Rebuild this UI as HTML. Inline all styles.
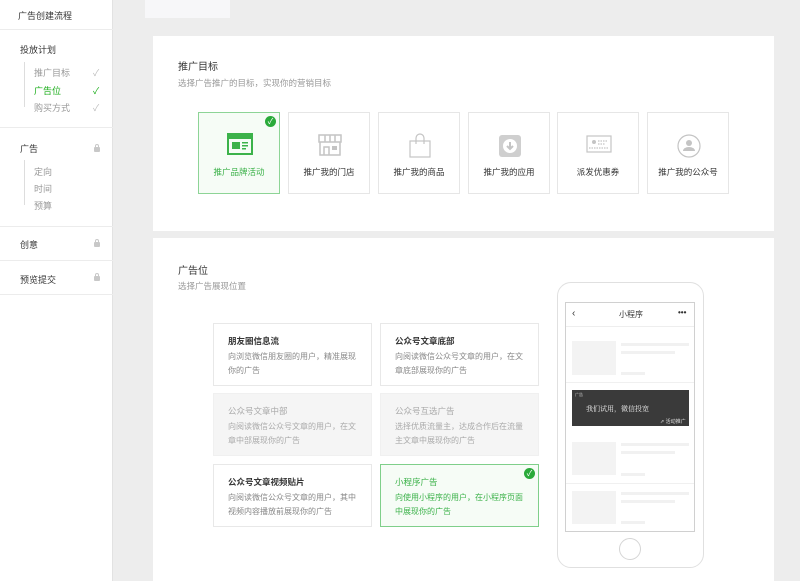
<!DOCTYPE html>
<html><head><meta charset="utf-8"><style>
*{margin:0;padding:0;box-sizing:border-box}
body{width:800px;height:581px;overflow:hidden;background:#ededed;font-family:"Liberation Sans","Noto Sans CJK SC",sans-serif;position:relative;color:#353535}
.a{position:absolute}
.sb{left:0;top:0;width:113px;height:581px;background:#fff;border-right:1px solid #e2e2e2}
.sb .t{font-size:9px;color:#353535}
.hr{left:0;width:113px;height:1px;background:#ececec}
.sub{font-size:9px;color:#999}
.ck{font-size:9px;color:#bbb}
.lk{width:6px;height:5px;background:#c8c8c8;border-radius:1px}
.lk:before{content:"";position:absolute;left:1px;top:-3px;width:4px;height:4px;border:1px solid #c8c8c8;border-bottom:none;border-radius:2px 2px 0 0;box-sizing:border-box}
.card{background:#fff;left:153px;width:621px}
.h{font-size:10px;color:#353535}
.s{font-size:8.5px;color:#9a9a9a}
.tile{top:112px;width:82px;height:82px;background:#fff;border:1px solid #e6e6e6;text-align:center}
.tile .l{position:absolute;left:0;right:0;top:53px;font-size:8.5px;color:#353535}
.tile svg{position:absolute;left:28px;top:20px}
.pc{width:159px;height:63px;background:#fff;border:1px solid #e8e8e8;padding:11px 0 0 14px}
.pc b{display:block;font-size:8.5px;font-weight:bold;color:#353535;margin-bottom:3px}
.pc p{font-size:8px;line-height:14px;color:#888;width:130px}
.pc.d{background:#f5f5f5;border-color:#f0f0f0}
.pc.d b{font-weight:normal;color:#aaa}.pc.d p{color:#aaa}
.pc.g{background:#f6fcf6;border-color:#7fcf8a}
.pc.g b{font-weight:normal;color:#3cb24a}.pc.g p{color:#3cb24a}
.gc{width:11px;height:11px;border-radius:50%;background:#2aaa3a;color:#fff;font-size:8px;line-height:11px;text-align:center}
.gl{background:#f1f1f1;height:3px}
</style></head><body>
<div class="a sb">
 <div class="a t" style="left:18px;top:9px">广告创建流程</div>
 <div class="a hr" style="top:29px"></div>
 <div class="a t" style="left:20px;top:43px">投放计划</div>
 <div class="a" style="left:24px;top:62px;width:1px;height:45px;background:#ddd"></div>
 <div class="a sub" style="left:34px;top:66px">推广目标</div><div class="a ck" style="left:93px;top:66px">✓</div>
 <div class="a sub" style="left:34px;top:84px;color:#1aad19">广告位</div><div class="a ck" style="left:93px;top:84px;color:#1aad19">✓</div>
 <div class="a sub" style="left:34px;top:101px">购买方式</div><div class="a ck" style="left:93px;top:101px">✓</div>
 <div class="a hr" style="top:127px"></div>
 <div class="a t" style="left:20px;top:142px">广告</div><div class="a lk" style="left:94px;top:147px"></div>
 <div class="a" style="left:24px;top:160px;width:1px;height:45px;background:#ddd"></div>
 <div class="a sub" style="left:34px;top:165px">定向</div>
 <div class="a sub" style="left:34px;top:182px">时间</div>
 <div class="a sub" style="left:34px;top:199px">预算</div>
 <div class="a hr" style="top:226px"></div>
 <div class="a t" style="left:20px;top:238px">创意</div><div class="a lk" style="left:94px;top:242px"></div>
 <div class="a hr" style="top:260px"></div>
 <div class="a t" style="left:20px;top:273px">预览提交</div><div class="a lk" style="left:94px;top:276px"></div>
 <div class="a hr" style="top:294px"></div>
</div>
<div class="a" style="left:145px;top:0;width:85px;height:18px;background:#f7f7f9"></div>

<div class="a card" style="top:36px;height:195px">
 <div class="a h" style="left:25px;top:22px">推广目标</div>
 <div class="a s" style="left:25px;top:41px">选择广告推广的目标，实现你的营销目标</div>
</div>
<div class="a tile" style="left:198px;background:#f6fcf6;border-color:#8dd496">
 <svg width="26" height="22" viewBox="0 0 26 22"><rect x="1" y="1" width="24" height="20" fill="none" stroke="#3cb24a" stroke-width="2"/><rect x="1" y="1" width="24" height="5" fill="#3cb24a"/><rect x="5" y="9" width="8" height="7" fill="#3cb24a"/><rect x="15" y="9" width="6" height="1.5" fill="#3cb24a"/><rect x="15" y="12" width="6" height="1.5" fill="#3cb24a"/><rect x="15" y="15" width="4" height="1.5" fill="#3cb24a"/></svg>
 <div class="l" style="color:#3cb24a">推广品牌活动</div>
 <div class="a gc" style="left:66px;top:3px">✓</div>
</div>
<div class="a tile" style="left:288px"><svg width="26" height="24" viewBox="0 0 26 24"><path d="M2 2h22v7H2z M8 2v7 M13 2v7 M18 2v7" fill="none" stroke="#c4c4c4" stroke-width="1.5"/><path d="M3 9v13h20V9 M7 22v-8h5v8" fill="none" stroke="#c4c4c4" stroke-width="1.5"/><rect x="15" y="13" width="5" height="4" fill="#c4c4c4"/></svg><div class="l">推广我的门店</div></div>
<div class="a tile" style="left:378px"><svg width="26" height="26" viewBox="0 0 26 26"><rect x="3" y="8" width="20" height="16" fill="none" stroke="#c4c4c4" stroke-width="1.2"/><path d="M9 11V5a4 4 0 0 1 8 0v6" fill="none" stroke="#c4c4c4" stroke-width="1.2"/></svg><div class="l">推广我的商品</div></div>
<div class="a tile" style="left:468px"><svg width="26" height="26" viewBox="0 0 26 26"><rect x="2" y="2" width="22" height="22" rx="3" fill="#cfcfcf"/><circle cx="13" cy="13" r="7" fill="#fff"/><path d="M13 9v7 M10 13l3 3 3-3" stroke="#c4c4c4" stroke-width="2" fill="none"/></svg><div class="l">推广我的应用</div></div>
<div class="a tile" style="left:557px"><svg width="26" height="22" viewBox="0 0 26 22"><rect x="1" y="3" width="24" height="16" fill="none" stroke="#c4c4c4" stroke-width="1.2"/><circle cx="8" cy="9" r="2" fill="#c4c4c4"/><path d="M12 8h9 M12 11h7 M3 15h20" stroke="#c4c4c4" stroke-width="1.2" stroke-dasharray="1.5 1"/></svg><div class="l">派发优惠券</div></div>
<div class="a tile" style="left:647px"><svg width="26" height="26" viewBox="0 0 26 26"><circle cx="13" cy="13" r="11" fill="none" stroke="#c4c4c4" stroke-width="1.2"/><circle cx="13" cy="10" r="3" fill="#c4c4c4"/><path d="M7 18a6 4 0 0 1 12 0z" fill="#c4c4c4"/></svg><div class="l">推广我的公众号</div></div>

<div class="a card" style="top:238px;height:343px">
 <div class="a h" style="left:25px;top:24px">广告位</div>
 <div class="a s" style="left:25px;top:42px">选择广告展现位置</div>
</div>
<div class="a pc" style="left:213px;top:323px"><b>朋友圈信息流</b><p>向浏览微信朋友圈的用户，精准展现你的广告</p></div>
<div class="a pc" style="left:380px;top:323px"><b>公众号文章底部</b><p>向阅读微信公众号文章的用户，在文章底部展现你的广告</p></div>
<div class="a pc d" style="left:213px;top:393px"><b>公众号文章中部</b><p>向阅读微信公众号文章的用户，在文章中部展现你的广告</p></div>
<div class="a pc d" style="left:380px;top:393px"><b>公众号互选广告</b><p>选择优质流量主，达成合作后在流量主文章中展现你的广告</p></div>
<div class="a pc" style="left:213px;top:464px"><b>公众号文章视频贴片</b><p>向阅读微信公众号文章的用户，其中视频内容播放前展现你的广告</p></div>
<div class="a pc g" style="left:380px;top:464px"><b>小程序广告</b><p>向使用小程序的用户，在小程序页面中展现你的广告</p><div class="a gc" style="left:143px;top:3px">✓</div></div>

<div class="a" style="left:557px;top:282px;width:147px;height:286px;border:1px solid #e0e0e0;border-radius:14px;background:#fff"></div>
<div class="a" style="left:565px;top:302px;width:130px;height:230px;border:1.5px solid #d0d0d0;background:#fff"></div>
<div class="a" style="left:572px;top:308px;font-size:10px;color:#333">‹</div>
<div class="a" style="left:619px;top:309px;font-size:8px;color:#333">小程序</div>
<div class="a" style="left:678px;top:308px;font-size:8px;font-weight:bold;color:#333">•••</div>
<div class="a" style="left:566px;top:326px;width:128px;height:1px;background:#eee"></div>
<div class="a" style="left:572px;top:341px;width:44px;height:34px;background:#f3f3f3"></div>
<div class="a gl" style="left:621px;top:343px;width:68px"></div><div class="a gl" style="left:621px;top:351px;width:54px"></div><div class="a gl" style="left:621px;top:372px;width:24px"></div>
<div class="a" style="left:566px;top:382px;width:128px;height:1px;background:#f0f0f0"></div>
<div class="a" style="left:572px;top:390px;width:117px;height:36px;background:#3a3a3a"></div>
<div class="a" style="left:575px;top:392px;font-size:4px;color:#ccc">广告</div>
<div class="a" style="left:586px;top:404px;font-size:7px;color:#eee;font-family:'Noto Serif CJK SC',serif">我们试用，微信投宽</div>
<div class="a" style="left:660px;top:418px;font-size:5px;color:#ddd">⇗ 活动推广</div>
<div class="a" style="left:572px;top:442px;width:44px;height:33px;background:#f3f3f3"></div>
<div class="a gl" style="left:621px;top:443px;width:68px"></div><div class="a gl" style="left:621px;top:451px;width:54px"></div><div class="a gl" style="left:621px;top:473px;width:24px"></div>
<div class="a" style="left:566px;top:483px;width:128px;height:1px;background:#f0f0f0"></div>
<div class="a" style="left:572px;top:491px;width:44px;height:33px;background:#f3f3f3"></div>
<div class="a gl" style="left:621px;top:492px;width:68px"></div><div class="a gl" style="left:621px;top:500px;width:54px"></div><div class="a gl" style="left:621px;top:521px;width:24px"></div>
<div class="a" style="left:619px;top:538px;width:22px;height:22px;border:1px solid #d5d5d5;border-radius:50%"></div>
</body></html>
